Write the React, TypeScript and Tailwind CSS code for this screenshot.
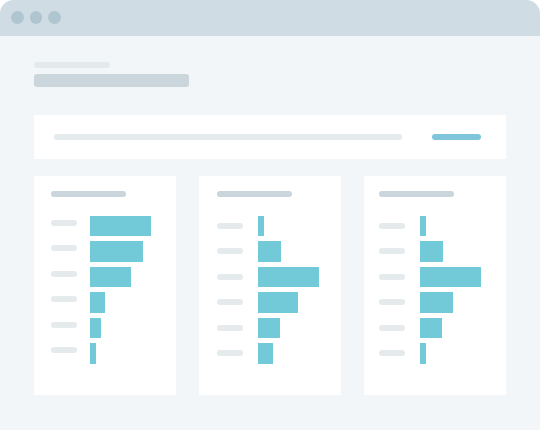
const cards = [
  {
    pad: "pl-[17px]",
    gap: "gap-[13px]",
    shift: "-translate-y-[3px]",
    bars: [61, 53, 41, 15, 11, 6],
  },
  {
    pad: "pl-[18px]",
    gap: "gap-[15px]",
    shift: "",
    bars: [6, 23, 61, 40, 22, 15],
  },
  {
    pad: "pl-[15px]",
    gap: "gap-[15px]",
    shift: "",
    bars: [6, 23, 61, 33, 22, 6],
  },
]

const Card = ({ pad, gap, shift, bars }: (typeof cards)[number]) => (
  <div className={`flex h-[219px] w-[142px] flex-col bg-white pt-[15px] ${pad}`}>
    <div className="h-[6px] w-[75px] rounded-full bg-[#cad5dc]"></div>
    <div className="mt-[18.7px] flex flex-col gap-[5px]">
      {bars.map((width, index) => (
        <div key={index} className={`flex items-center ${gap}`}>
          <div
            className={`h-[6px] w-[26px] rounded-full bg-[#e5eaec] ${shift}`}
          ></div>
          <div
            className="h-[20.5px] bg-[#72cad8]"
            style={{ width: `${width}px` }}
          ></div>
        </div>
      ))}
    </div>
  </div>
)

export default function App() {
  return (
    <div className="h-[430px] w-[540px] bg-white">
      <div className="flex h-full flex-col overflow-hidden rounded-t-[14px] bg-[#f2f6f9]">
        <div className="flex h-[36px] shrink-0 items-start gap-[6px] bg-[#cfdce4] pl-[11px] pt-[11px]">
          <div className="h-[12.5px] w-[12.5px] rounded-full bg-[#afc6d1]"></div>
          <div className="h-[12.5px] w-[12.5px] rounded-full bg-[#afc6d1]"></div>
          <div className="h-[12.5px] w-[12.5px] rounded-full bg-[#afc6d1]"></div>
        </div>
        <div className="flex flex-col px-[34px] pt-[26px]">
          <div className="h-[6px] w-[76px] rounded-full bg-[#e4e9ec]"></div>
          <div className="mt-[6px] h-[13px] w-[155px] rounded-[3px] bg-[#cad5dc]"></div>
          <div className="mt-[28px] flex h-[44px] items-center bg-white pl-[20px]">
            <div className="h-[6px] w-[348px] rounded-full bg-[#e5eaec]"></div>
            <div className="ml-[30px] h-[6px] w-[49px] rounded-full bg-[#7fc6dc]"></div>
          </div>
          <div className="mt-[17px] flex gap-[23px]">
            {cards.map((card, index) => (
              <Card key={index} {...card} />
            ))}
          </div>
        </div>
      </div>
    </div>
  )
}
